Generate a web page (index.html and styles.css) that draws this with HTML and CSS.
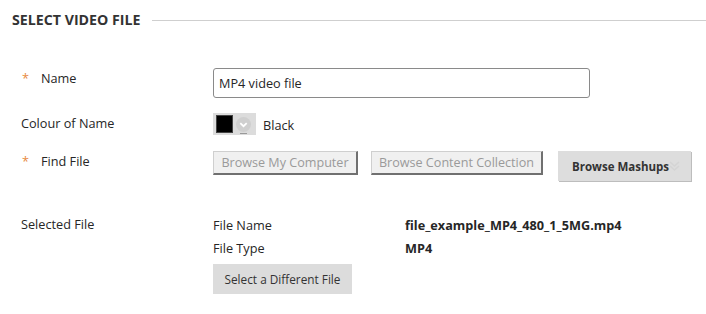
FILE: index.html
```html
<!DOCTYPE html>
<html>
<head>
<meta charset="utf-8">
<link rel="stylesheet" href="styles.css">
</head>
<body>
<div class="section">
  <div class="legend"><h2 class="legend-title">Select Video File</h2><span class="legend-line"></span></div>
  <div class="rows">
    <div class="row row-name">
      <div class="label"><span class="req">*</span>Name</div>
      <div class="field"><input class="text-input" type="text" value="MP4 video file"></div>
    </div>
    <div class="row row-colour">
      <div class="label label-plain">Colour of Name</div>
      <div class="field colour-field">
        <span class="picker"><span class="swatch"></span><span class="picker-btn"><svg width="15" height="15" viewBox="0 0 15 15"><circle cx="7.5" cy="7.5" r="7.5" fill="#cfcfcf"/><path d="M4.3 6.2 L7.5 9.2 L10.7 6.2" fill="none" stroke="#fff" stroke-width="1.8"/></svg><span class="picker-dash"></span></span></span>
        <span class="colour-name">Black</span>
      </div>
    </div>
    <div class="row row-find">
      <div class="label"><span class="req">*</span>Find File</div>
      <div class="field buttons">
        <button class="btn-disabled btn-computer">Browse My Computer</button>
        <button class="btn-disabled btn-content">Browse Content Collection</button>
        <button class="btn-mashup">Browse Mashups<svg class="dbl" width="11" height="12" viewBox="0 0 11 12"><path d="M1 2 L5.5 6 L10 2 M1 6 L5.5 10 L10 6" fill="none" stroke="#d4d4d4" stroke-width="1.6"/></svg></button>
      </div>
    </div>
    <div class="row row-selected">
      <div class="label label-plain">Selected File</div>
      <div class="field">
        <div class="info"><span class="info-key">File Name</span><span class="info-val">file_example_MP4_480_1_5MG.mp4</span></div>
        <div class="info"><span class="info-key">File Type</span><span class="info-val">MP4</span></div>
        <button class="btn-grey">Select a Different File</button>
      </div>
    </div>
  </div>
</div>
</body>
</html>
```
FILE: styles.css
```css
html, body { margin: 0; padding: 0; background: #fff; }
body { font-family: "Open Sans", "Liberation Sans", sans-serif; color: #262626; font-size: 12.7px; }
.section { padding: 0 0 0 12px; }
.legend { display: flex; align-items: center; height: 40px; }
.legend-title { margin: 0; font-size: 14.2px; font-weight: 700; text-transform: uppercase; color: #333; line-height: 20px; }
.legend-line { flex: 1; height: 1px; background: #cfcfcf; margin-left: 12px; }
.rows { padding-left: 9px; padding-top: 28px; }
.row { display: grid; grid-template-columns: 192px 1fr; }
.label { line-height: 18px; padding-top: 1px; }
.req { color: #e88a3e; display: inline-block; width: 20px; padding-left: 1px; box-sizing: border-box; }
.row-name { margin-bottom: 15px; }
.row-name .label { padding-top: 1px; }
.text-input { box-sizing: border-box; width: 377px; height: 30px; border: 1px solid #8a8a8a; border-radius: 3px; padding: 0 5px; font-family: inherit; font-size: 12.7px; color: #262626; outline: none; }
.row-colour { margin-bottom: 16px; }
.colour-field { display: flex; align-items: flex-start; }
.picker { display: flex; align-items: center; width: 43px; height: 22px; background: #dcdcdc; box-sizing: border-box; padding-left: 3px; }
.swatch { width: 17px; height: 18px; background: #000; border: 1px solid #444; box-sizing: border-box; }
.picker-btn { position: relative; width: 15px; height: 15px; margin-left: 3px; margin-top: 1px; display: block; }
.picker-btn svg { display: block; }
.picker-dash { position: absolute; left: 4px; top: 16px; width: 7px; height: 1px; background: #999; }
.colour-name { margin-left: 7px; line-height: 18px; padding-top: 3px; }
.row-find { margin-bottom: 33px; }
.buttons { display: flex; align-items: flex-start; }
.btn-disabled { box-sizing: border-box; font-family: inherit; font-size: 12.6px; color: #9a9a9a; background: #f0f0f0; height: 24px; padding: 0; text-align: center; border-style: solid; border-width: 1px 2px 2px 1px; border-color: #cfcfcf #707070 #707070 #cfcfcf; line-height: 20px; }
.btn-computer { width: 145px; margin-right: 13px; }
.btn-content { width: 172px; margin-right: 15px; }
.btn-mashup { box-sizing: border-box; font-family: inherit; font-size: 11.5px; font-weight: 700; color: #333; background: #dddddd; height: 30px; width: 133px; border: none; box-shadow: 1px 1px 0 #bdbdbd; padding: 0 0 0 14px; display: flex; align-items: center; }
.info { display: grid; grid-template-columns: 192px 1fr; line-height: 18px; margin-bottom: 5px; }
.row-selected .field { padding-top: 2px; }
.info-val { font-weight: 700; }
.btn-grey { font-family: inherit; font-size: 11.8px; color: #333; background: #dcdcdc; border: none; width: 139px; height: 30px; margin-top: 2px; padding: 0; }
```
